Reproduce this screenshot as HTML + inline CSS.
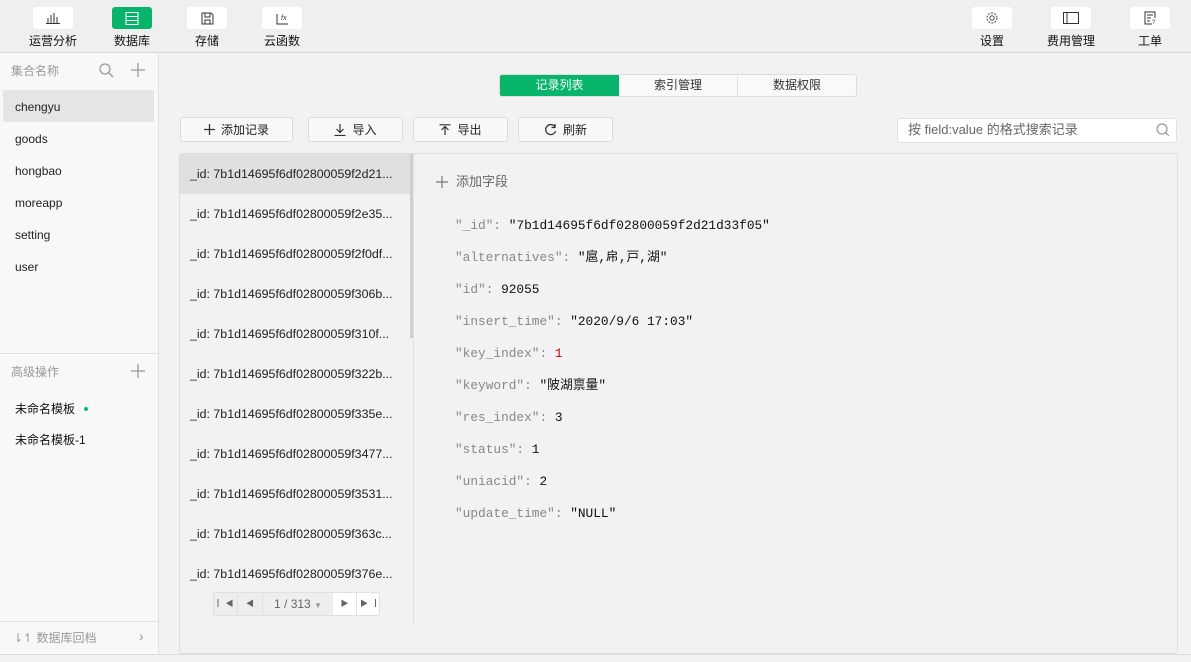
<!DOCTYPE html>
<html><head><meta charset="utf-8"><style>
*{box-sizing:border-box;margin:0;padding:0}
body{width:1191px;height:662px;overflow:hidden;background:#f2f2f2;font-family:"Liberation Sans","Noto Sans CJK SC",sans-serif;font-size:12px;line-height:16px;color:#222;position:relative}
.a{position:absolute}
.top{left:0;top:0;width:1191px;height:53px;background:#efefef;border-bottom:1px solid #d8d8d8}
.ib{position:absolute;top:7px;width:40px;height:22px;background:#fff;border-radius:3px;display:flex;align-items:center;justify-content:center}
.lb{position:absolute;top:33px;font-size:12px;color:#111;width:80px;text-align:center}
.side{left:0;top:54px;width:159px;height:600px;background:#f8f8f8;border-right:1px solid #e2e2e2}
.it{position:absolute;left:15px;font-size:12px;color:#222}
.btn{position:absolute;top:117px;height:25px;background:#f8f8f8;border:1px solid #dcdcdc;border-radius:3px;display:flex;align-items:center;justify-content:center;font-size:12px;color:#222;gap:6px}
.row{position:absolute;left:190px;font-size:12.4px;color:#222}
.f{position:absolute;left:455px;font-family:"Liberation Mono","Noto Sans CJK SC",monospace;font-size:12.8px;line-height:16px;height:16px;color:#888;white-space:nowrap}
.f b{font-weight:normal;color:#111}
.f i{font-style:normal;color:#c00}
</style></head><body>
<div class="a top"></div>
<div class="ib" style="left:33px"><svg width="14" height="12"><path d="M2 11V6M5 11V3M8 11V1M11 11V5M0 11.5H14" stroke="#333" stroke-width="1"/></svg></div>
<div class="lb" style="left:13px">运营分析</div>
<div class="ib" style="left:112px;background:#07b46a"><svg width="14" height="13"><rect x="1" y="0.5" width="12" height="12" fill="none" stroke="#fff"/><path d="M1 4.5H13M1 8.5H13" stroke="#fff"/></svg></div>
<div class="lb" style="left:92px">数据库</div>
<div class="ib" style="left:187px"><svg width="13" height="13"><path d="M1 1H10L12 3V12H1Z M4 1V5H9V1 M4 12V8H9V12" fill="none" stroke="#333"/></svg></div>
<div class="lb" style="left:167px">存储</div>
<div class="ib" style="left:262px"><svg width="13" height="13"><path d="M1 2V12H12" fill="none" stroke="#333"/><text x="5" y="8" font-size="7" font-style="italic" fill="#333">fx</text></svg></div>
<div class="lb" style="left:242px">云函数</div>
<div class="ib" style="left:972px"><svg width="14" height="14"><circle cx="7" cy="7" r="5" fill="none" stroke="#444" stroke-dasharray="2 1.2"/><circle cx="7" cy="7" r="2.2" fill="none" stroke="#444"/></svg></div>
<div class="lb" style="left:952px">设置</div>
<div class="ib" style="left:1051px"><svg width="16" height="12"><rect x="0.5" y="0.5" width="15" height="11" fill="none" stroke="#333"/><path d="M4 0.5V11.5" stroke="#333"/></svg></div>
<div class="lb" style="left:1031px">费用管理</div>
<div class="ib" style="left:1130px"><svg width="13" height="14"><path d="M8 13H1V1H11V7M3 4H9M3 7H7M3 10H6" fill="none" stroke="#333"/><text x="8" y="13" font-size="6" fill="#333">?</text></svg></div>
<div class="lb" style="left:1110px">工单</div>

<div class="a side"></div>
<div class="a" style="left:11px;top:63px;color:#999;font-size:12px">集合名称</div>
<svg class="a" style="left:99px;top:63px" width="15" height="15"><circle cx="6" cy="6" r="5" fill="none" stroke="#999" stroke-width="1.3"/><path d="M10 10L14 14" stroke="#999" stroke-width="1.3"/></svg>
<svg class="a" style="left:131px;top:63px" width="14" height="14"><path d="M7 0V14M0 7H14" stroke="#999" stroke-width="1.3"/></svg>
<div class="a" style="left:3px;top:90px;width:151px;height:32px;background:#e5e5e5;border-radius:2px"></div>
<div class="it" style="top:99px">chengyu</div>
<div class="it" style="top:131px">goods</div>
<div class="it" style="top:163px">hongbao</div>
<div class="it" style="top:195px">moreapp</div>
<div class="it" style="top:227px">setting</div>
<div class="it" style="top:259px">user</div>
<div class="a" style="left:0;top:353px;width:158px;height:1px;background:#e0e0e0"></div>
<div class="a" style="left:11px;top:364px;color:#999">高级操作</div>
<svg class="a" style="left:131px;top:364px" width="14" height="14"><path d="M7 0V14M0 7H14" stroke="#999" stroke-width="1.3"/></svg>
<div class="it" style="top:401px;color:#111">未命名模板</div>
<div class="a" style="left:84px;top:407px;width:4px;height:4px;border-radius:50%;background:#07c160"></div>
<div class="it" style="top:432px;color:#111">未命名模板-1</div>
<div class="a" style="left:0;top:621px;width:158px;height:1px;background:#e0e0e0"></div>
<div class="a" style="left:13px;top:630px;color:#999">⇂↿ 数据库回档</div>
<div class="a" style="left:139px;top:628px;color:#999;font-size:14px">›</div>

<div class="a" style="left:499px;top:74px;width:358px;height:23px;border:1px solid #ddd;border-radius:3px;background:#f9f9f9;display:flex;font-size:12px">
<div style="width:119px;background:#07b46a;color:#fff;text-align:center;line-height:21px;border-radius:2px 0 0 2px">记录列表</div>
<div style="width:119px;text-align:center;line-height:21px;border-right:1px solid #e2e2e2;color:#333">索引管理</div>
<div style="flex:1;text-align:center;line-height:21px;color:#333">数据权限</div></div>

<div class="btn" style="left:180px;width:113px"><svg width="11" height="11"><path d="M5.5 0V11M0 5.5H11" stroke="#333" stroke-width="1.3"/></svg>添加记录</div>
<div class="btn" style="left:308px;width:95px"><svg width="12" height="12"><path d="M6 0V8M2.5 5L6 8.5L9.5 5M0.5 11.5H11.5" fill="none" stroke="#333" stroke-width="1.2"/></svg>导入</div>
<div class="btn" style="left:413px;width:95px"><svg width="12" height="12"><path d="M6 11V3M2.5 6L6 2.5L9.5 6M0.5 0.8H11.5" fill="none" stroke="#333" stroke-width="1.2"/></svg>导出</div>
<div class="btn" style="left:518px;width:95px"><svg width="13" height="13"><path d="M11 4A5 5 0 1 0 11.5 8M11 1V4.5H7.5" fill="none" stroke="#333" stroke-width="1.3"/></svg>刷新</div>
<div class="a" style="left:897px;top:118px;width:280px;height:25px;background:#fff;border:1px solid #e0e0e0;border-radius:3px"></div>
<div class="a" style="left:908px;top:122px;color:#666;font-size:13px">按 field:value 的格式搜索记录</div>
<svg class="a" style="left:1156px;top:123px" width="14" height="14"><circle cx="6" cy="6" r="5" fill="none" stroke="#999" stroke-width="1.2"/><path d="M9.5 9.5L13 13" stroke="#999" stroke-width="1.2"/></svg>

<div class="a" style="left:179px;top:153px;width:999px;height:501px;border:1px solid #dedede;border-radius:3px;background:#f2f2f2"></div>
<div class="a" style="left:180px;top:154px;width:230px;height:40px;background:#e0e0e0"></div>
<div class="a" style="left:410px;top:154px;width:3px;height:184px;background:#cfcfcf"></div>
<div class="a" style="left:413px;top:154px;width:1px;height:470px;background:#e2e2e2"></div>
<div class="row" style="top:166px">_id: 7b1d14695f6df02800059f2d21...</div>
<div class="row" style="top:206px">_id: 7b1d14695f6df02800059f2e35...</div>
<div class="row" style="top:246px">_id: 7b1d14695f6df02800059f2f0df...</div>
<div class="row" style="top:286px">_id: 7b1d14695f6df02800059f306b...</div>
<div class="row" style="top:326px">_id: 7b1d14695f6df02800059f310f...</div>
<div class="row" style="top:366px">_id: 7b1d14695f6df02800059f322b...</div>
<div class="row" style="top:406px">_id: 7b1d14695f6df02800059f335e...</div>
<div class="row" style="top:446px">_id: 7b1d14695f6df02800059f3477...</div>
<div class="row" style="top:486px">_id: 7b1d14695f6df02800059f3531...</div>
<div class="row" style="top:526px">_id: 7b1d14695f6df02800059f363c...</div>
<div class="row" style="top:566px">_id: 7b1d14695f6df02800059f376e...</div>
<div class="a" style="left:213px;top:592px;width:167px;height:24px;border:1px solid #e0e0e0;border-radius:2px;background:#fff;display:flex;font-size:12px;color:#666">
<div style="width:24px;background:#eee;border-right:1px solid #e0e0e0;text-align:center;line-height:22px;font-size:8px">▏◀</div>
<div style="width:25px;background:#eee;border-right:1px solid #e0e0e0;text-align:center;line-height:22px;font-size:8px">◀</div>
<div style="width:70px;background:#eee;text-align:center;line-height:22px">1 / 313 <span style="font-size:8px;color:#999">▼</span></div>
<div style="width:24px;border-right:1px solid #e0e0e0;text-align:center;line-height:22px;font-size:8px">▶</div>
<div style="flex:1;text-align:center;line-height:22px;font-size:8px">▶▕</div></div>

<svg class="a" style="left:436px;top:176px" width="12" height="12"><path d="M6 0V12M0 6H12" stroke="#777" stroke-width="1.2"/></svg>
<div class="a" style="left:456px;top:174px;color:#666;font-size:13px">添加字段</div>
<div class="f" style="top:218px">"_id": <b>"7b1d14695f6df02800059f2d21d33f05"</b></div>
<div class="f" style="top:250px">"alternatives": <b>"扈,帍,戸,湖"</b></div>
<div class="f" style="top:282px">"id": <b>92055</b></div>
<div class="f" style="top:314px">"insert_time": <b>"2020/9/6 17:03"</b></div>
<div class="f" style="top:346px">"key_index": <i>1</i></div>
<div class="f" style="top:378px">"keyword": <b>"陂湖禀量"</b></div>
<div class="f" style="top:410px">"res_index": <b>3</b></div>
<div class="f" style="top:442px">"status": <b>1</b></div>
<div class="f" style="top:474px">"uniacid": <b>2</b></div>
<div class="f" style="top:506px">"update_time": <b>"NULL"</b></div>
<div class="a" style="left:0;top:654px;width:1191px;height:1px;background:#dcdcdc"></div>
</body></html>
